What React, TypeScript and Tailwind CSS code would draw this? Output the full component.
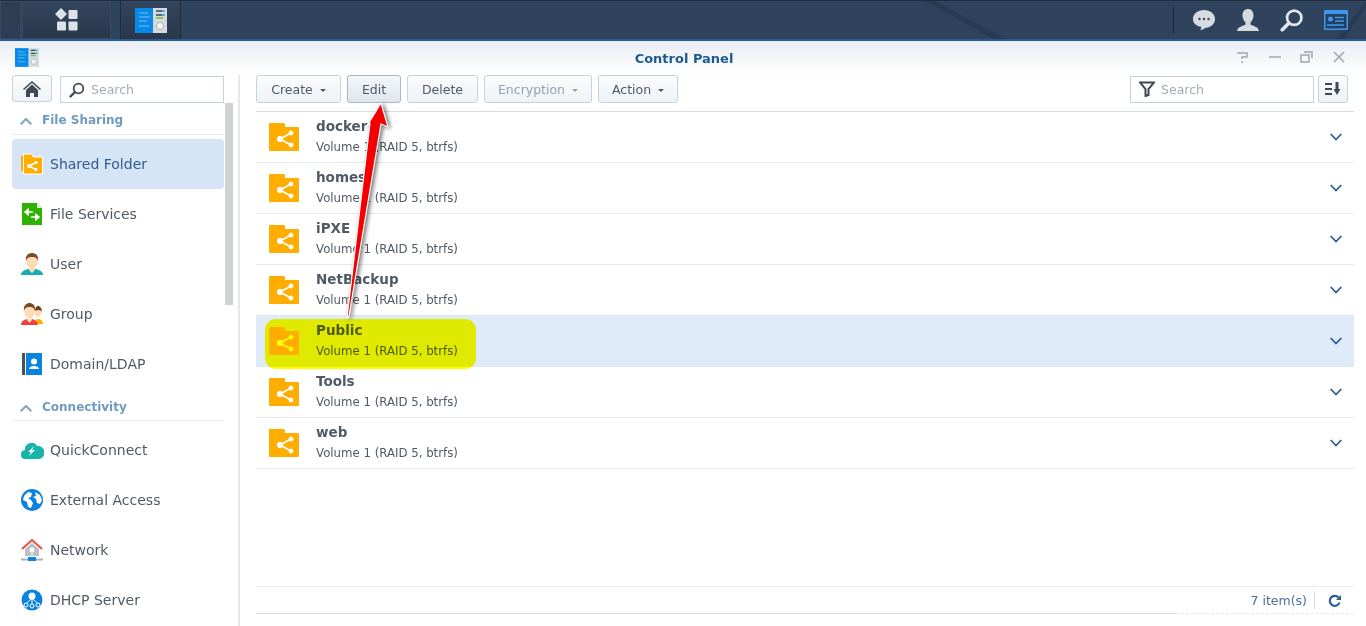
const font = "font-['DejaVu_Sans',sans-serif]";

function FolderShare({ className }: { className?: string }) {
  return (
    <svg width="30" height="28" viewBox="0 0 30 28" className={className}>
      <path d="M0 1a1 1 0 0 1 1-1h14l1 1v3h13a1 1 0 0 1 1 1v22a1 1 0 0 1-1 1H1a1 1 0 0 1-1-1z" fill="#ffae00" />
      <g fill="#fff" stroke="#fff">
        <path d="M11 16 L22 10 M11 16 L22 22" strokeWidth="1.800" fill="none" />
        <circle cx="11" cy="16" r="2.700" />
        <circle cx="22" cy="10" r="2" />
        <circle cx="22" cy="22" r="2" />
      </g>
    </svg>
  );
}

function PanelIcon({ size }: { size: number }) {
  const h = Math.round((size * 25) / 32);
  return (
    <svg width={size} height={h} viewBox="0 0 32 25">
      <rect x="18" width="14" height="25" fill="#d5dade" />
      <rect width="18" height="25" fill="#0a8ae6" />
      <path d="M4 5h9M4 9h11M4 13h8M4 18h10" stroke="#6cc4f7" strokeWidth="1" />
      <path d="M21 3h6M21 7h6" stroke="#3a4656" strokeWidth="1.500" />
      <path d="M27 3h3M27 7h3" stroke="#1ea7e8" strokeWidth="1.500" />
      <path d="M21 10h7" stroke="#6cc024" strokeWidth="1.500" />
      <circle cx="25" cy="18" r="3.600" fill="#f2f4f5" stroke="#aab2b8" />
    </svg>
  );
}

function SideIcon({ name }: { name: string }) {
  if (name === "Shared Folder")
    return (
      <svg width="24" height="24" viewBox="0 0 24 24">
        <path d="M1 4h2v15H1z" fill="#ffae00" />
        <path d="M3.500 2h8l2 3h9v17h-19z" fill="#ffae00" stroke="#fff" />
        <path d="M9 14l7-3.500M9 14l7 3.500" stroke="#fff" strokeWidth="1.600" />
        <circle cx="9" cy="14" r="2" fill="#fff" />
        <circle cx="16" cy="10.500" r="1.600" fill="#fff" />
        <circle cx="16" cy="17.500" r="1.600" fill="#fff" />
      </svg>
    );
  if (name === "File Services")
    return (
      <svg width="24" height="24" viewBox="0 0 24 24">
        <path d="M2 1h15l5 5v17H2z" fill="#2fb100" />
        <path d="M17 1l5 5h-5z" fill="#dff3d5" />
        <path d="M5 10h8M5 10l3-2.600v5.200zM19 15h-8M19 15l-3-2.600v5.200z" stroke="#fff" strokeWidth="1.600" fill="#fff" />
      </svg>
    );
  if (name === "User")
    return (
      <svg width="24" height="24" viewBox="0 0 24 24">
        <path d="M1 23c0-4 4-5 7-6h8c3 1 7 2 7 6z" fill="#16aeb6" />
        <path d="M9 14h6v4l-3 3-3-3z" fill="#fddcb5" />
        <ellipse cx="12" cy="9" rx="6" ry="7.500" fill="#fddcb5" />
        <path d="M6 9C5 3 9 1 12 1s7 2 6 8c-1-3-2-4-6-4S7 6 6 9z" fill="#7a4a24" />
      </svg>
    );
  if (name === "Group")
    return (
      <svg width="24" height="24" viewBox="0 0 24 24">
        <path d="M15 19c1-1 2-2 3-2 3 0 5 2 5 5h-8z" fill="#ffae00" />
        <ellipse cx="18" cy="10" rx="3.600" ry="5" fill="#fddcb5" />
        <path d="M15 9c0-4 2-5 3-5s4 1 4 6c-1-2-3-3-7-1z" fill="#6b3f1e" />
        <path d="M1 23c0-4 3-5 6-6h5c3 1 5 2 6 6z" fill="#ef3f3f" />
        <path d="M7 15h5v3l-2.500 3-2.500-3z" fill="#fddcb5" />
        <ellipse cx="9.500" cy="9" rx="5.500" ry="7.500" fill="#fddcb5" stroke="#fff" strokeWidth=".5" />
        <path d="M4 9C3 3 7 1 9.500 1S16 3 15 9c-1-3-2-4-5.500-4S5 6 4 9z" fill="#7a4a24" />
      </svg>
    );
  if (name === "Domain/LDAP")
    return (
      <svg width="24" height="24" viewBox="0 0 24 24">
        <rect x="2" y="1" width="3" height="22" fill="#47505e" />
        <rect x="6" y="1" width="16" height="22" fill="#0a83e0" />
        <circle cx="14" cy="9.500" r="3" fill="#fff" />
        <path d="M9 17c0-2 3-3 5-3s5 1 5 3z" fill="#fff" />
      </svg>
    );
  if (name === "QuickConnect")
    return (
      <svg width="24" height="24" viewBox="0 0 24 24">
        <path d="M5 21a4 4 0 0 1-4-4.500A4.500 4.500 0 0 1 5 12 6.500 6.500 0 0 1 17 8a5 5 0 0 1 2 13z" fill="#15b5ac" />
        <path d="M14 8l-6 6h3l-2 4 6-6h-3l2-4z" fill="#fff" />
      </svg>
    );
  if (name === "External Access")
    return (
      <svg width="24" height="24" viewBox="0 0 24 24">
        <circle cx="12" cy="12" r="11" fill="#0a83e0" />
        <path d="M4 8l4-4 4 1-1 4-3 1 3 2 2 3-2 5-3-1-1-5-4-2zM15 4l5 3 2 5-2 4-3-1-1-4-3-2 3-1z" fill="#fff" />
      </svg>
    );
  if (name === "Network")
    return (
      <svg width="24" height="24" viewBox="0 0 24 24">
        <path d="M5 11l7-6 7 6v7H5z" fill="#b9c0c6" />
        <path d="M2 11l10-9 10 9" fill="none" stroke="#ee4a4a" strokeWidth="2" />
        <circle cx="12" cy="12" r="2.500" fill="#fff" />
        <path d="M1 21.500h22" stroke="#aab2b8" strokeWidth="2" />
        <path d="M12 14v5" stroke="#fff" />
        <rect x="8" y="19" width="8" height="4" fill="#0a83e0" />
      </svg>
    );
  return (
    <svg width="24" height="24" viewBox="0 0 24 24">
      <circle cx="12" cy="12" r="10.500" fill="#0a83e0" />
      <circle cx="12" cy="8" r="3.500" fill="#fff" />
      <path d="M12 10v7M12 10l-6 6M12 10l6 6" stroke="#fff" />
      <circle cx="6" cy="17" r="2" fill="#0a83e0" stroke="#fff" />
      <circle cx="12" cy="18" r="2" fill="#0a83e0" stroke="#fff" />
      <circle cx="18" cy="17" r="2" fill="#0a83e0" stroke="#fff" />
    </svg>
  );
}

function SideItem({ name, active }: { name: string; active?: boolean }) {
  return (
    <div className={`flex h-[50px] w-[212px] items-center gap-[6px] rounded-[4px] pl-[8px] text-[14px] ${active ? "bg-[#d5e5f6] text-[#2f5c8f]" : "text-[#505a64]"}`}>
      <SideIcon name={name} />
      <span>{name}</span>
    </div>
  );
}

function SideHeader({ label, className }: { label: string; className: string }) {
  return (
    <div className={`flex h-[32px] w-[212px] items-end gap-[10px] border-b border-[#e6eaee] pl-[8px] text-[12px] font-bold text-[#6f9bc2] ${className}`}>
      <svg width="12" height="7" viewBox="0 0 12 7" fill="none" stroke="#7ea3c4" strokeWidth="2" className="mb-[4px]">
        <path d="M.7 6.300L6 1l5.300 5.300" />
      </svg>
      <span>{label}</span>
    </div>
  );
}

function ToolButton({ label, width, caret, disabled, pressed }: { label: string; width: string; caret?: boolean; disabled?: boolean; pressed?: boolean }) {
  return (
    <div className={`flex h-[28px] items-center justify-center gap-[7px] rounded-[3px] border pt-[2px] text-[12.5px] ${width} ${pressed ? "border-[#a9b6c4] bg-gradient-to-b from-[#f4f7fa] to-[#dfe6ed]" : "border-[#c6d2de] bg-gradient-to-b from-[#fbfcfd] to-[#eef3f7]"} ${disabled ? "text-[#98a2ac]" : "text-[#505a64]"}`}>
      <span>{label}</span>
      {caret && <span className={`h-0 w-0 border-x-[3.500px] border-t-[3.500px] border-x-transparent ${disabled ? "border-t-[#98a2ac]" : "border-t-[#505a64]"}`} />}
    </div>
  );
}

function MagIcon({ size, color }: { size: number; color: string }) {
  return (
    <svg width={size} height={size} viewBox="0 0 16 16">
      <circle cx="9.500" cy="6.500" r="4.800" fill="none" stroke={color} strokeWidth="1.800" />
      <path d="M6 10l-4.500 4.500" stroke={color} strokeWidth="2.400" strokeLinecap="round" />
    </svg>
  );
}

const folders = ["docker", "homes", "iPXE", "NetBackup", "Public", "Tools", "web"];

export default function App() {
  return (
    <div className={`relative flex h-[626px] w-[1366px] flex-col overflow-hidden bg-white ${font}`}>
      {/* Taskbar */}
      <div className="relative flex h-[41px] shrink-0 items-stretch border-t border-t-[#1e2c40] border-b-[2px] border-b-[#2a5a95] bg-[#2f435d]">
        <svg width="1366" height="38" className="absolute left-0 top-0">
          <path d="M925 0L994 38h12L935 0z" fill="#24344a" opacity=".55" />
          <path d="M1344 38L1366 6v-6L1336 38z" fill="#24344a" opacity=".55" />
        </svg>
        <div className="relative h-[38px] w-[21px] border border-[#3a4a5e] bg-[#2c3d54]" />
        <div className="relative ml-[1px] flex h-[38px] w-[89px] items-center justify-center border border-[#3a4a5e] bg-gradient-to-b from-[#33465e] to-[#28374b]">
          <svg width="24" height="24" viewBox="0 0 24 24" fill="#dde2e8">
            <path d="M6 0l6 6-6 6-6-6z" />
            <rect x="13.500" y="2" width="9" height="9" rx="1" />
            <rect x="2" y="13.500" width="9" height="9" rx="1" />
            <rect x="13.500" y="13.500" width="9" height="9" rx="1" />
          </svg>
        </div>
        <div className="relative ml-[9px] flex h-[38px] w-[61px] items-center justify-center border-x border-x-[#1f2c3e] bg-gradient-to-b from-[#33465e] to-[#28374b]">
          <PanelIcon size={32} />
        </div>
        <div className="relative ml-auto flex items-center">
          <div className="mr-[18px] h-[26px] w-px bg-[#1c2a3d]" />
          <svg width="24" height="24" viewBox="0 0 24 24" className="mr-[20px]">
            <path d="M12 2c6 0 11 3.500 11 9s-5 9-10 9c-1 1-3 2-5 2 1-1 1.500-2 1.500-3C4 18 1 15 1 11c0-5.500 5-9 11-9z" fill="#d5dbe1" />
            <circle cx="7.500" cy="11" r="1.200" fill="#3a4656" />
            <circle cx="12" cy="11" r="1.200" fill="#3a4656" />
            <circle cx="16.500" cy="11" r="1.200" fill="#3a4656" />
          </svg>
          <svg width="24" height="24" viewBox="0 0 24 24" className="mr-[20px]">
            <path d="M12 1c4 0 5.500 3 5.500 6.500 0 3-1.500 5.500-3 7v2c2 1.500 8 2 8.500 6.500H1c.500-4.500 6.500-5 8.500-6.500v-2c-1.500-1.500-3-4-3-7C6.500 4 8 1 12 1z" fill="#d5dbe1" />
          </svg>
          <div className="mr-[20px]">
            <MagIcon size={24} color="#e2e7ec" />
          </div>
          <svg width="24" height="20" viewBox="0 0 24 20" className="mr-[18px]">
            <rect width="24" height="20" rx="1" fill="#3d97f0" />
            <rect x="1.500" y="4" width="21" height="14.500" fill="#26405f" />
            <circle cx="6.500" cy="9" r="2.500" fill="#3d97f0" />
            <path d="M11 7.500h9M11 11h9M3 15h17" stroke="#3d97f0" strokeWidth="1.500" />
          </svg>
        </div>
      </div>

      {/* Window title */}
      <div className="relative flex h-[34px] shrink-0 items-center bg-gradient-to-b from-[#e9eef3] to-white">
        <div className="ml-[15px] -mt-[2px]">
          <PanelIcon size={24} />
        </div>
        <div className="absolute inset-x-0 top-[8px] pl-[2px] text-center text-[13px] font-bold text-[#1d5a94]">Control Panel</div>
        <div className="ml-auto mr-[20px] -mt-[2px] flex items-center gap-[18px]">
          <svg width="14" height="14" viewBox="0 0 14 14" fill="none" stroke="#a0a7ae" strokeWidth="1.500">
            <path d="M1 3h10v4H6v2M6 11v2" />
          </svg>
          <svg width="14" height="14" viewBox="0 0 14 14" stroke="#a0a7ae" strokeWidth="1.500">
            <path d="M1 7h12" />
          </svg>
          <svg width="14" height="14" viewBox="0 0 14 14" fill="none" stroke="#a0a7ae" strokeWidth="1.500">
            <rect x="1" y="5" width="8" height="7" />
            <path d="M4 2h8v6" />
          </svg>
          <svg width="14" height="14" viewBox="0 0 14 14" stroke="#a0a7ae" strokeWidth="1.600">
            <path d="M2 2l10 10M12 2L2 12" />
          </svg>
        </div>
      </div>

      <div className="flex min-h-0 flex-1">
        {/* Sidebar */}
        <div className="relative w-[240px] shrink-0 border-r-[2px] border-r-[#e8e8e8] pl-[12px]">
          <div className="flex h-[28px] gap-[8px]">
            <div className="flex h-[27px] w-[40px] items-center justify-center rounded-[3px] border border-[#c6d2de] bg-gradient-to-b from-[#fbfcfd] to-[#eef3f7]">
              <svg width="18" height="16" viewBox="0 0 18 16" fill="#3f4854">
                <path d="M9 0L0 8l1 1 8-7 8 7 1-1z" />
                <path d="M3 9l6-5.500L15 9v7h-4v-4H7v4H3z" />
              </svg>
            </div>
            <div className="mt-[1px] flex h-[27px] w-[164px] items-center gap-[6px] border border-[#c6d2de] pl-[8px] pt-[1px] text-[12.5px] text-[#a2acb6]">
              <MagIcon size={16} color="#3f4854" />
              <span>Search</span>
            </div>
          </div>
          <SideHeader label="File Sharing" className="pb-[5px]" />
          <div className="h-[4px]" />
          <SideItem name="Shared Folder" active />
          <SideItem name="File Services" />
          <SideItem name="User" />
          <SideItem name="Group" />
          <SideItem name="Domain/LDAP" />
          <SideHeader label="Connectivity" className="pb-[4px]" />
          <div className="h-[4px]" />
          <SideItem name="QuickConnect" />
          <SideItem name="External Access" />
          <SideItem name="Network" />
          <SideItem name="DHCP Server" />
          <div className="absolute left-[225px] top-[28px] h-[202px] w-[8px] bg-[#d0d1d3]" />
        </div>

        {/* Content */}
        <div className="flex min-w-0 flex-1 flex-col pl-[16px] pr-[12px]">
          <div className="flex h-[37px] shrink-0 gap-[6px] border-b border-b-[#d4dde5]">
            <ToolButton label="Create" width="w-[85px]" caret />
            <ToolButton label="Edit" width="w-[54px]" pressed />
            <ToolButton label="Delete" width="w-[71px]" />
            <ToolButton label="Encryption" width="w-[108px]" caret disabled />
            <ToolButton label="Action" width="w-[80px]" caret />
            <div className="ml-auto mt-[1px] flex h-[27px] w-[184px] items-center gap-[6px] border border-[#c6d2de] pl-[8px] pt-[2px] text-[12.5px] text-[#a2acb6]">
              <svg width="16" height="16" viewBox="0 0 16 16" fill="none" stroke="#3f4854" strokeWidth="2" className="-mt-[3px]">
                <path d="M1 1.500h14L9.500 8v6l-3 1V8z" />
              </svg>
              <span>Search</span>
            </div>
            <div className="-ml-[2px] mr-[6px] flex h-[28px] w-[30px] items-center justify-center rounded-[3px] border border-[#c6d2de] bg-gradient-to-b from-[#fbfcfd] to-[#eef3f7]">
              <svg width="16" height="14" viewBox="0 0 16 14" stroke="#3f4854" strokeWidth="2" fill="#3f4854">
                <path d="M0 2h7M0 7h7M0 12h7" fill="none" />
                <path d="M12 0v8" fill="none" strokeWidth="3" />
                <path d="M8.500 7h7L12 13z" strokeWidth="0" />
              </svg>
            </div>
          </div>

          <div className="flex-1">
            {folders.map((f) => (
              <div key={f} className={`flex h-[51px] items-center border-b border-b-[#e4e9ee] pl-[13px] pr-[12px] ${f === "Public" ? "bg-[#dfeafa]" : ""}`}>
                <FolderShare className="shrink-0" />
                <div className="ml-[17px] -mt-[4px]">
                  <div className="text-[13.5px] leading-[20px] font-bold text-[#505a64]">{f}</div>
                  <div className="mt-[3px] text-[11.750px] leading-[16px] text-[#505a64]">Volume 1 (RAID 5, btrfs)</div>
                </div>
                <svg width="12" height="8" viewBox="0 0 12 8" fill="none" stroke="#2c5e95" strokeWidth="1.800" className="ml-auto -mt-[1px]">
                  <path d="M.7 1L6 6.500 11.300 1" />
                </svg>
              </div>
            ))}
          </div>

          <div className="h-[27px] shrink-0 border-t border-t-[#e4e9ee]">
            <div className="flex h-[26px] items-center justify-end">
              <span className="mt-[2px] text-[12.5px] text-[#4d6f9c]">7 item(s)</span>
              <div className="ml-[7px] h-[18px] w-px bg-[#d4dde5]" />
              <svg width="14" height="14" viewBox="0 0 14 14" fill="none" className="ml-[13px] mr-[12px] mt-[1px]">
                <path d="M11.500 8.500A5 5 0 1 1 10.500 3.500" stroke="#2c5e95" strokeWidth="2.200" />
                <path d="M13 1v5H8z" fill="#2c5e95" />
              </svg>
            </div>
          </div>
          <div className="flex h-[13px] shrink-0">
            <div className="h-px w-[920px] bg-[#d4dde5]" />
            <div className="h-px flex-1 border-t border-dashed border-t-[#e4e9ee]" />
          </div>
        </div>
      </div>

      {/* Highlighter over the Public row */}
      <div className="absolute left-[265px] top-[319px] h-[50px] w-[211px] rounded-[11px] bg-[#ffff00] mix-blend-multiply" />

      {/* Red arrow annotation */}
      <svg width="1366" height="626" className="pointer-events-none absolute left-0 top-0">
        <path
          d="M381 103 L388 127 L381 124 L349 316 L347 318 L370 123 L367 126 Z"
          fill="#f40000"
          stroke="#fff"
          strokeWidth="1.200"
          strokeLinejoin="round"
          className="drop-shadow-[2px_1px_2px_rgba(0,0,0,0.55)]"
        />
      </svg>
    </div>
  );
}
